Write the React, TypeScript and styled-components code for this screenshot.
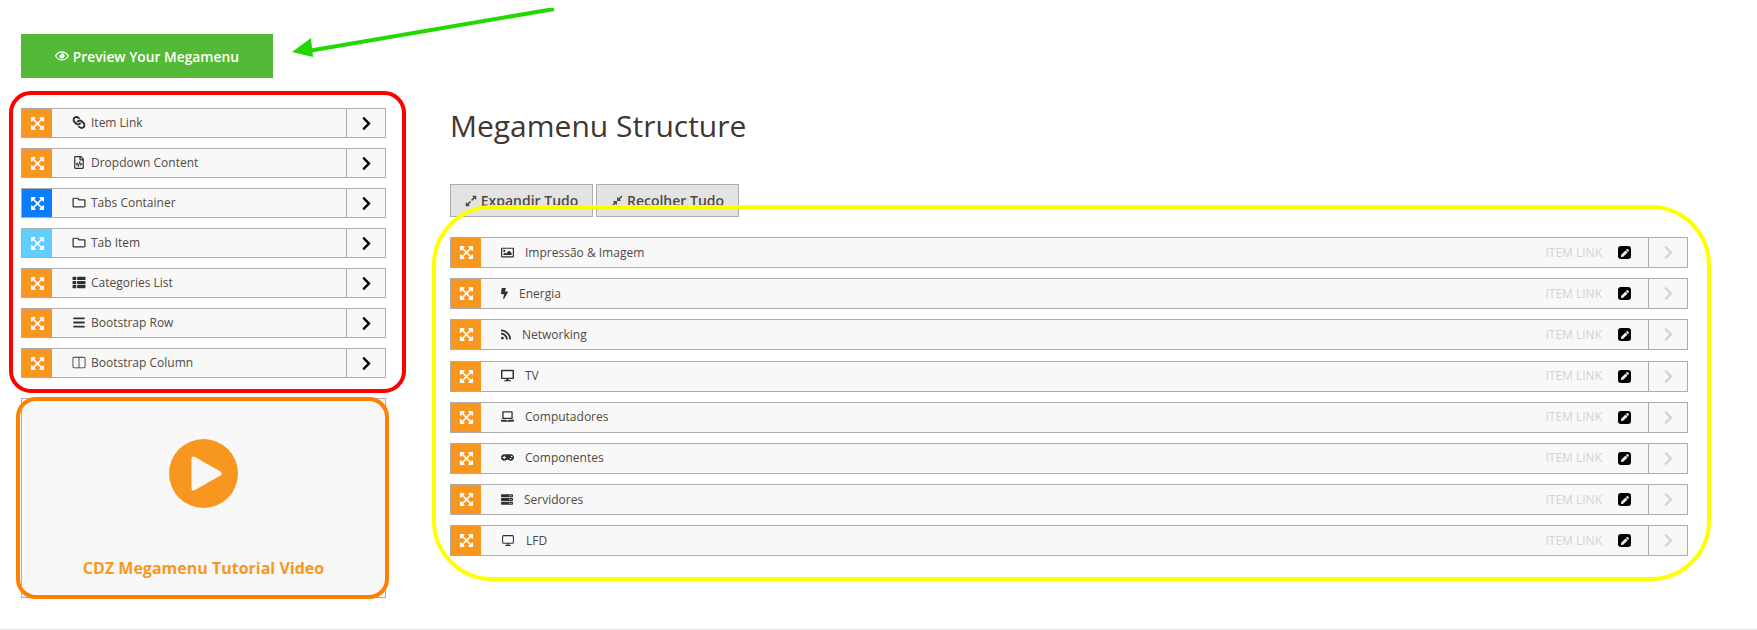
import React from 'react';
import styled, { createGlobalStyle } from 'styled-components';
import {
  FaBars,
  FaBolt,
  FaChevronRight,
  FaCompressAlt,
  FaDesktop,
  FaExpandAlt,
  FaExpandArrowsAlt,
  FaGamepad,
  FaLaptop,
  FaLink,
  FaPen,
  FaRegEye,
  FaRegFileCode,
  FaRegFolder,
  FaRegImage,
  FaRss,
  FaServer,
  FaThList,
} from 'react-icons/fa';
import { FiMonitor } from 'react-icons/fi';
import { BsLayoutSplit } from 'react-icons/bs';

const ORANGE = '#f8971f';

const GlobalStyle = createGlobalStyle`
  html, body {
    margin: 0;
    padding: 0;
    background: #fff;
    font-family: 'Open Sans', 'Liberation Sans', sans-serif;
    color: #41362f;
  }
  * { box-sizing: border-box; }
`;

const ChainIcon = styled(FaLink)`
  transform: rotate(90deg);
`;

const widgets = [
  { label: 'Item Link', icon: <ChainIcon />, color: ORANGE },
  { label: 'Dropdown Content', icon: <FaRegFileCode />, color: ORANGE },
  { label: 'Tabs Container', icon: <FaRegFolder />, color: '#0a7dfb' },
  { label: 'Tab Item', icon: <FaRegFolder />, color: '#62cdff' },
  { label: 'Categories List', icon: <FaThList />, color: ORANGE },
  { label: 'Bootstrap Row', icon: <FaBars />, color: ORANGE },
  { label: 'Bootstrap Column', icon: <BsLayoutSplit />, color: ORANGE },
];

const items = [
  { label: 'Impressão & Imagem', icon: <FaRegImage />, width: 13 },
  { label: 'Energia', icon: <FaBolt />, width: 7 },
  { label: 'Networking', icon: <FaRss />, width: 10 },
  { label: 'TV', icon: <FaDesktop />, width: 13 },
  { label: 'Computadores', icon: <FaLaptop />, width: 13 },
  { label: 'Componentes', icon: <FaGamepad />, width: 13 },
  { label: 'Servidores', icon: <FaServer />, width: 12 },
  { label: 'LFD', icon: <FiMonitor />, width: 14 },
];

const App = () => (
  <Page>
    <GlobalStyle />
    <Sidebar>
      <PreviewButton>
        <FaRegEye /> Preview Your Megamenu
      </PreviewButton>
      <WidgetList>
        {widgets.map((w) => (
          <WidgetRow key={w.label}>
            <Handle $color={w.color}>
              <FaExpandArrowsAlt />
            </Handle>
            <WidgetLabel>
              <LabelIcon $width={14}>{w.icon}</LabelIcon>
              <span>{w.label}</span>
            </WidgetLabel>
            <ArrowCell>
              <FaChevronRight />
            </ArrowCell>
          </WidgetRow>
        ))}
      </WidgetList>
      <VideoCard>
        <PlayCircle>
          <svg width="31" height="35" viewBox="0 0 31 35">
            <path
              d="M3.500 0.800 L29.500 15.500 Q32 17.500 29.500 19.500 L3.500 34.200 Q0.500 35.500 0.500 32 L0.500 3 Q0.500 -0.500 3.500 0.800 Z"
              fill="#f7f7f7"
            />
          </svg>
        </PlayCircle>
        <VideoTitle>CDZ Megamenu Tutorial Video</VideoTitle>
      </VideoCard>
    </Sidebar>

    <Main>
      <Heading>Megamenu Structure</Heading>
      <Toolbar>
        <ToolButton>
          <FaExpandAlt /> Expandir Tudo
        </ToolButton>
        <ToolButton>
          <FaCompressAlt /> Recolher Tudo
        </ToolButton>
      </Toolbar>
      <ItemList>
        {items.map((item) => (
          <ItemRow key={item.label}>
            <Handle $color={ORANGE}>
              <FaExpandArrowsAlt />
            </Handle>
            <ItemLabel>
              <LabelIcon $width={item.width}>{item.icon}</LabelIcon>
              <span>{item.label}</span>
            </ItemLabel>
            <ItemType>Item Link</ItemType>
            <EditBadge>
              <FaPen />
            </EditBadge>
            <ItemArrow>
              <FaChevronRight />
            </ItemArrow>
          </ItemRow>
        ))}
      </ItemList>
    </Main>

    <RedOutline />
    <OrangeOutline />
    <YellowOutline />
    <ArrowMark width="270" height="50" viewBox="0 0 270 50">
      <line x1="262" y1="1" x2="16" y2="43" stroke="#22d800" strokeWidth="4" />
      <polygon points="0,44 19,30 21,49" fill="#22d800" />
    </ArrowMark>
  </Page>
);

const Page = styled.div`
  position: relative;
  display: flex;
  align-items: flex-start;
  height: 630px;
  padding: 34px 0 0 21px;
  border-bottom: 1px solid #e3e3e3;
  overflow: hidden;
`;

const Sidebar = styled.aside`
  flex: 0 0 365px;
  display: flex;
  flex-direction: column;
`;

const PreviewButton = styled.button`
  display: flex;
  align-items: center;
  justify-content: center;
  gap: 4px;
  width: 252px;
  height: 44px;
  border: 0;
  padding: 0;
  background: #54b936;
  color: #fff;
  font-family: inherit;
  font-size: 13.800px;
  font-weight: 600;
`;

const WidgetList = styled.div`
  display: flex;
  flex-direction: column;
  gap: 10px;
  margin-top: 30px;
`;

const WidgetRow = styled.div`
  display: flex;
  height: 30px;
  border: 1px solid #adadad;
  background: #f8f8f8;
`;

const Handle = styled.div<{ $color: string }>`
  flex: 0 0 30px;
  display: flex;
  align-items: center;
  justify-content: center;
  background: ${(p) => p.$color};
  color: #fff;
  font-size: 15px;
`;

const WidgetLabel = styled.div`
  flex: 1;
  display: flex;
  align-items: center;
  gap: 5px;
  padding: 0 0 2px 20px;
  font-size: 12px;
  color: #514943;
`;

const LabelIcon = styled.span<{ $width: number }>`
  flex: 0 0 ${(p) => p.$width}px;
  display: flex;
  align-items: center;
  color: #303030;
  svg {
    width: ${(p) => p.$width}px;
    height: 13px;
  }
`;

const ArrowCell = styled.div`
  flex: 0 0 39px;
  display: flex;
  align-items: center;
  justify-content: center;
  border-left: 1px solid #adadad;
  color: #000;
  font-size: 15px;
`;

const VideoCard = styled.div`
  display: flex;
  flex-direction: column;
  align-items: center;
  height: 200px;
  margin-top: 20px;
  padding-top: 40px;
  border: 1px solid #adadad;
  background: #f8f8f8;
`;

const PlayCircle = styled.div`
  display: flex;
  align-items: center;
  justify-content: center;
  width: 69px;
  height: 69px;
  padding-left: 5px;
  border-radius: 50%;
  background: ${ORANGE};
`;

const VideoTitle = styled.div`
  margin-top: 49px;
  font-size: 16px;
  font-weight: 700;
  color: ${ORANGE};
`;

const Main = styled.main`
  flex: 0 0 1238px;
  margin-left: 64px;
  display: flex;
  flex-direction: column;
`;

const Heading = styled.h1`
  margin: 72px 0 0;
  font-size: 30px;
  font-weight: 400;
  line-height: 40px;
  color: #41362f;
`;

const Toolbar = styled.div`
  display: flex;
  gap: 3px;
  margin-top: 38px;
`;

const ToolButton = styled.button`
  display: flex;
  align-items: center;
  justify-content: center;
  gap: 4px;
  width: 143px;
  height: 33px;
  padding: 0;
  border: 1px solid #adadad;
  background: #e3e3e3;
  color: #514943;
  font-family: inherit;
  font-size: 14px;
  font-weight: 600;
  svg {
    font-size: 12px;
  }
`;

const ItemList = styled.div`
  display: flex;
  flex-direction: column;
  gap: 10.200px;
  margin-top: 20px;
`;

const ItemRow = styled.div`
  display: flex;
  align-items: stretch;
  height: 31px;
  border: 1px solid #adadad;
  background: #f8f8f8;
`;

const ItemLabel = styled.div`
  flex: 1;
  display: flex;
  align-items: center;
  gap: 11px;
  padding: 0 0 1px 20px;
  font-size: 12px;
  color: #514943;
`;

const ItemType = styled.div`
  display: flex;
  align-items: center;
  margin-right: 16px;
  padding-bottom: 1px;
  font-size: 12px;
  text-transform: uppercase;
  color: #d3d3d3;
`;

const EditBadge = styled.div`
  align-self: center;
  display: flex;
  align-items: center;
  justify-content: center;
  width: 13px;
  height: 13px;
  margin-right: 17px;
  border-radius: 3px;
  background: #000;
  color: #eee;
  font-size: 8px;
`;

const ItemArrow = styled(ArrowCell)`
  color: #d3d3d3;
`;

const Outline = styled.div`
  position: absolute;
  pointer-events: none;
  border-style: solid;
  border-width: 4px;
`;

const RedOutline = styled(Outline)`
  left: 9px;
  top: 91px;
  width: 397px;
  height: 302px;
  border-color: #ff0000;
  border-radius: 22px;
`;

const OrangeOutline = styled(Outline)`
  left: 16px;
  top: 397px;
  width: 373px;
  height: 202px;
  border-color: #ff8000;
  border-radius: 20px;
`;

const YellowOutline = styled(Outline)`
  left: 432px;
  top: 205px;
  width: 1279px;
  height: 376px;
  border-color: #ffff00;
  border-radius: 60px;
`;

const ArrowMark = styled.svg`
  position: absolute;
  left: 292px;
  top: 8px;
  pointer-events: none;
`;

export default App;
